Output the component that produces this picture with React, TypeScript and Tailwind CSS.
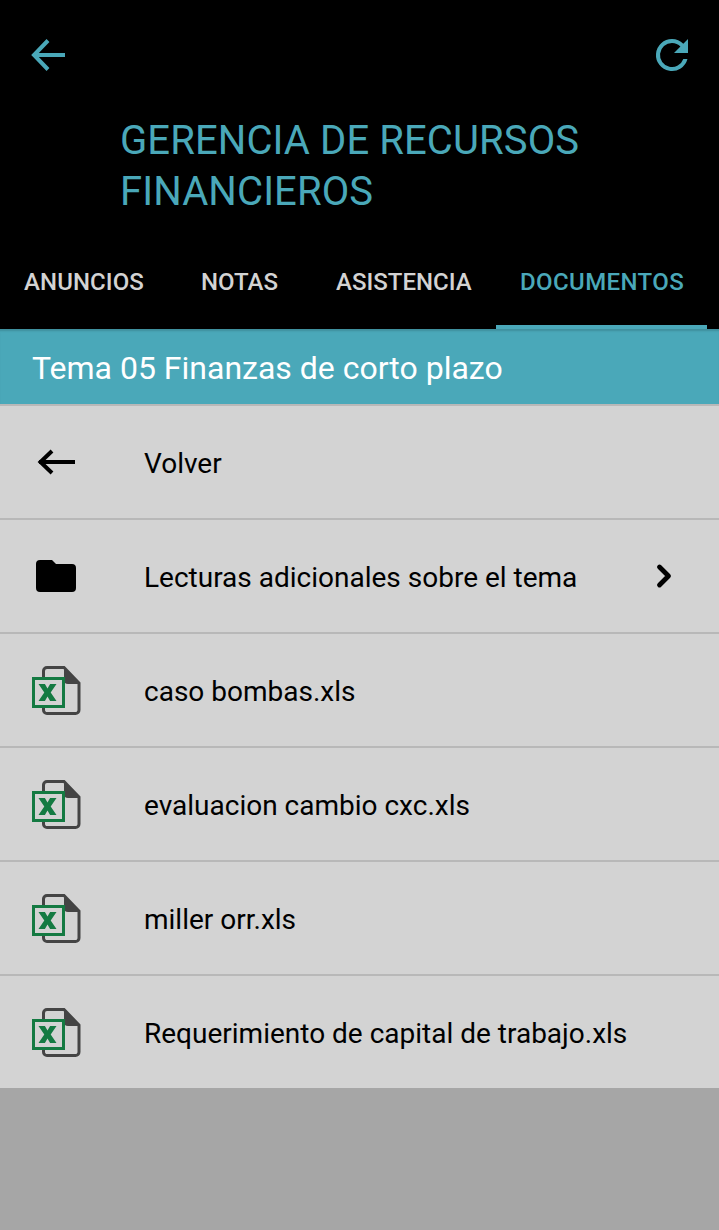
import React from 'react';
import { ChevronRight } from 'lucide-react';

const tabs = [
  { label: 'ANUNCIOS', className: 'w-[168px] pl-6 pb-[6px] text-[#d3d3d3] tracking-[0.1px]' },
  { label: 'NOTAS', className: 'w-[135px] pl-[33px] pb-[6px] text-[#d3d3d3]' },
  { label: 'ASISTENCIA', className: 'w-[193px] pl-[33px] pb-[6px] text-[#d3d3d3]' },
  { label: 'DOCUMENTOS', className: 'w-[211px] pl-6 pb-[2px] text-[#4aa8b9] tracking-[0.4px] border-b-4 border-[#4aa8b9]' },
];

const files = ['caso bombas.xls', 'evaluacion cambio cxc.xls', 'miller orr.xls', 'Requerimiento de capital de trabajo.xls'];

const ExcelIcon = () => (
  <svg width="50" height="50" viewBox="0 -1 50 50" fill="none" className="overflow-visible">
    <path d="M12.5 11V5a3.5 3.5 0 0 1 3.5-3.5h17L48 17v27a3.5 3.5 0 0 1-3.5 3.5H16a3.5 3.5 0 0 1-3.5-3.5v-2" stroke="#444" strokeWidth="3" />
    <path d="M33 1.5 L49 18 H37 a4 4 0 0 1-4-4Z" fill="#444" />
    <rect x="2.5" y="12.5" width="30" height="28" stroke="#147a42" strokeWidth="3" />
    <path d="M7.5 18h6.4l2.6 4.4L19.100 18h6.400l-5.800 8.500L25.500 35h-6.400l-2.600-4.400L13.900 35H7.500l5.800-8.500Z" fill="#147a42" />
  </svg>
);

const Row = ({ icon, label, chevron }: { icon: React.ReactNode; label: string; chevron?: boolean }) => (
  <div className="flex h-[114px] items-center border-b-2 border-[#b8b8b8] last:h-[112px] last:border-b-0">
    <div className="flex w-[144px] pl-[31px]">
      <div className="flex w-[50px] justify-center">{icon}</div>
    </div>
    <span className="flex-1 pt-[3px] text-[28px] leading-9 text-black">{label}</span>
    {chevron && <ChevronRight size={36} strokeWidth={3.2} className="mr-[37px] text-black" />}
  </div>
);

const App: React.FC = () => {
  return (
    <div className="flex h-[1230px] w-[719px] flex-col bg-[#a6a6a6] font-['Roboto',sans-serif]">
      <header className="bg-black">
        <div className="mt-[31px] flex h-[48px] items-center justify-between pl-[27px] pr-[23px]">
          <svg width="42" height="42" viewBox="0 0 42 42" fill="none" stroke="#4aa8b9" strokeWidth="4">
            <path d="M8 21h30M21 6.500 7 21l14 14.500" />
          </svg>
          <svg width="48" height="48" viewBox="0 0 24 24">
            <path
              fill="#4aa8b9"
              d="M17.65 6.35A7.96 7.96 0 0 0 12 4a8 8 0 1 0 7.73 10h-2.08A6 6 0 1 1 12 6c1.66 0 3.14.69 4.22 1.78L13 11h7V4z"
            />
          </svg>
        </div>
        <h1 className="mt-[36px] pl-[120px] text-[40px] font-normal leading-[51px] tracking-[0.1px] text-[#4aa8b9]">
          GERENCIA DE RECURSOS
          <br />
          FINANCIEROS
        </h1>
        <nav className="mt-[23px] flex h-[89px]">
          {tabs.map((tab) => (
            <div key={tab.label} className={`flex items-center text-[24px] font-medium ${tab.className}`}>
              {tab.label}
            </div>
          ))}
        </nav>
      </header>

      <div className="flex h-[75px] items-center bg-[#4aa8b9] pl-8 pt-[2px] text-[32px] text-white shadow-[inset_0_3px_2px_-1px_rgba(0,0,0,0.15)]">
        Tema 05 Finanzas de corto plazo
      </div>

      <div className="border-t-2 border-[#b8b8b8] bg-[#d3d3d3]">
        <Row
          icon={
            <svg width="42" height="42" viewBox="0 0 42 42" fill="none" stroke="#000" strokeWidth="4">
              <path d="M4 21h36M17 10 5.500 21 17 32" />
            </svg>
          }
          label="Volver"
        />
        <Row
          icon={
            <svg width="48" height="48" viewBox="0 0 24 24">
              <path fill="#000" d="M10 4H4a2 2 0 0 0-2 2v12a2 2 0 0 0 2 2h16a2 2 0 0 0 2-2V8a2 2 0 0 0-2-2h-8z" />
            </svg>
          }
          label="Lecturas adicionales sobre el tema"
          chevron
        />
        {files.map((file) => (
          <Row key={file} icon={<ExcelIcon />} label={file} />
        ))}
      </div>
    </div>
  );
};

export default App;
